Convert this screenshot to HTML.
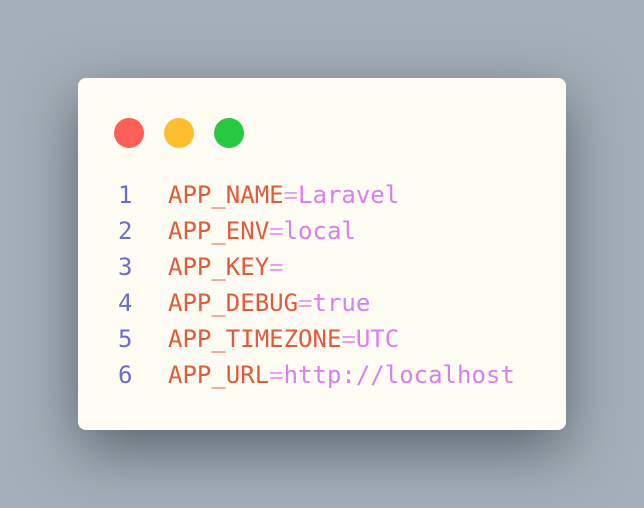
<!DOCTYPE html>
<html><head><style>
html,body{margin:0;padding:0}
body{width:644px;height:508px;background:#a5afb9;position:relative;overflow:hidden;font-family:"DejaVu Sans Mono","Liberation Mono",monospace}
.card{position:absolute;left:78px;top:78px;width:488px;height:352px;background:#fffcf3;border-radius:8px;box-shadow:0 20px 60px rgba(30,40,50,0.55)}
.dot{position:absolute;top:40px;width:30px;height:30px;border-radius:50%}
.code{position:absolute;left:40px;top:99px;font-size:24px;line-height:36px;white-space:pre}
.n{color:#6a6dcc;display:inline-block;width:50px}.k{color:#e05a3c}.e{color:#e7a0f4}.v{color:#d97ef0}
</style></head><body>
<div class="card">
<div class="dot" style="left:36px;background:#ff5f59"></div>
<div class="dot" style="left:86px;background:#ffbd2e"></div>
<div class="dot" style="left:136px;background:#28c840"></div>
<div class="code"><span class="n">1</span><span class="k">APP_NAME</span><span class="e">=</span><span class="v">Laravel</span>
<span class="n">2</span><span class="k">APP_ENV</span><span class="e">=</span><span class="v">local</span>
<span class="n">3</span><span class="k">APP_KEY</span><span class="e">=</span>
<span class="n">4</span><span class="k">APP_DEBUG</span><span class="e">=</span><span class="v">true</span>
<span class="n">5</span><span class="k">APP_TIMEZONE</span><span class="e">=</span><span class="v">UTC</span>
<span class="n">6</span><span class="k">APP_URL</span><span class="e">=</span><span class="v">http://localhost</span></div>
</div>
</body></html>
